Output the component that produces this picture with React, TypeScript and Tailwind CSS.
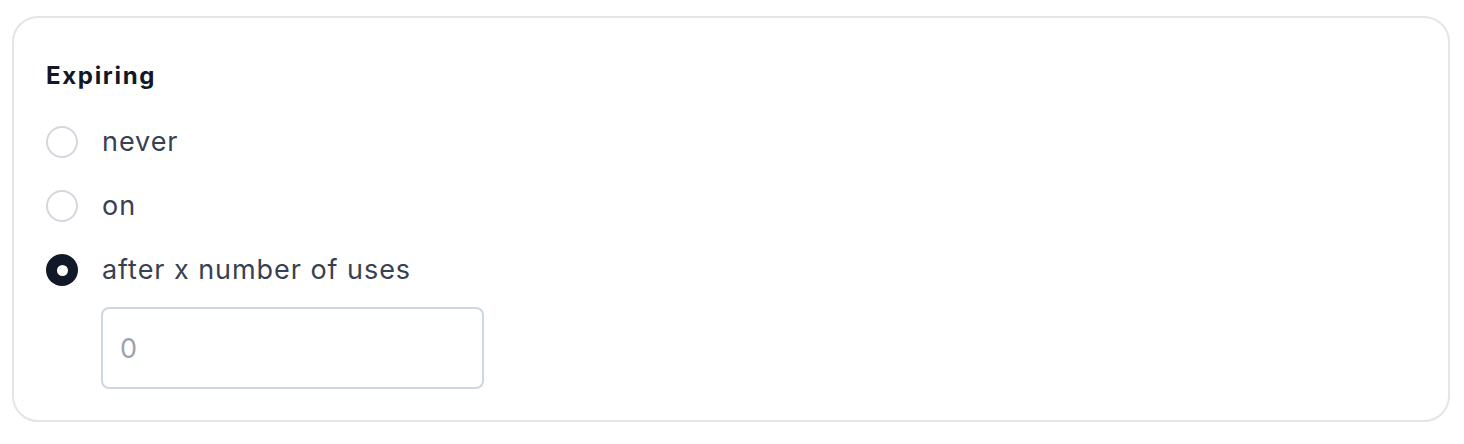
import { useState } from 'react';

type Expiry = 'never' | 'on' | 'uses';

const opciones: { id: Expiry; label: string }[] = [
  { id: 'never', label: 'never' },
  { id: 'on', label: 'on' },
  { id: 'uses', label: 'after x number of uses' },
];

function Radio({ checked }: { checked: boolean }) {
  return checked ? (
    <span className="flex h-8 w-8 shrink-0 items-center justify-center rounded-full bg-[#111827]">
      <span className="h-[11px] w-[11px] rounded-full bg-white" />
    </span>
  ) : (
    <span className="h-8 w-8 shrink-0 rounded-full border-2 border-[#d4d7dd] bg-white" />
  );
}

export default function App() {
  const [expiry, setExpiry] = useState<Expiry>('uses');
  const [uses, setUses] = useState('');

  return (
    <div
      className="min-h-screen bg-white pl-3 pr-[14px] pt-4"
      style={{ fontFamily: 'Inter, "Open Sans", sans-serif' }}
    >
      <div className="rounded-[26px] border-2 border-[#e4e4e9] px-8 pb-[31px] pt-[44px]">
        <h3 className="text-[24px] font-bold leading-7 tracking-[0.07em] text-[#111827]">Expiring</h3>

        <div className="mt-9 flex flex-col gap-8">
          {opciones.map((op) => (
            <label
              key={op.id}
              className="flex cursor-pointer items-center gap-6"
              onClick={() => setExpiry(op.id)}
            >
              <Radio checked={expiry === op.id} />
              <span className="text-[27px] leading-8 tracking-[0.035em] text-[#374151]">{op.label}</span>
            </label>
          ))}
        </div>

        {/* campo de número de usos */}
        <input
          type="number"
          placeholder="0"
          value={uses}
          onChange={(e) => setUses(e.target.value)}
          className="ml-[55px] mt-[21px] block h-[82px] w-[383px] rounded-lg border-2 border-[#cdd6e1] bg-white px-[17px] text-[27px] text-[#374151] outline-none placeholder:text-[#9ca3af]"
        />
      </div>
    </div>
  );
}
